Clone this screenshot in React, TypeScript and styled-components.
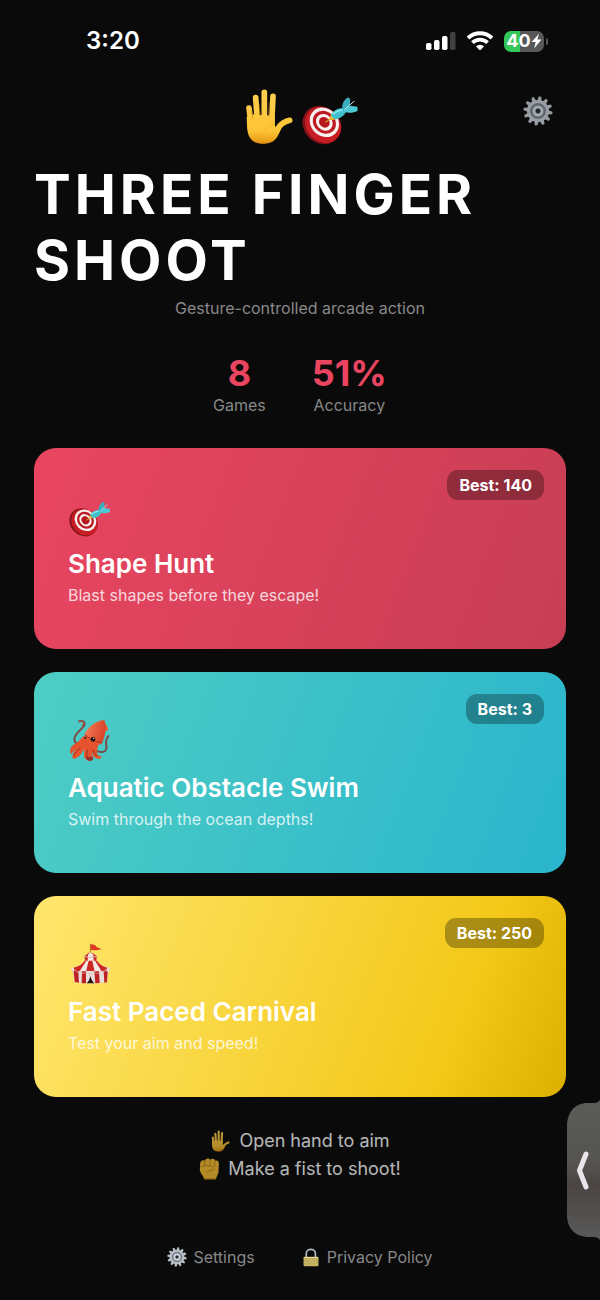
import React from 'react';
import styled, {createGlobalStyle} from 'styled-components';

const GlobalStyle = createGlobalStyle`
    * {
        box-sizing: border-box;
    }

    body {
        margin: 0;
        background: #0a0a0a;
        color: #fff;
        font-family: Inter, "Liberation Sans", sans-serif;
        font-size: 16px;
        line-height: 20px;
    }

    h1, h2, p, dl, dt, dd {
        margin: 0;
    }

    button {
        border: 0;
        padding: 0;
        background: none;
        color: inherit;
        font: inherit;
        cursor: pointer;
    }
`

const Screen = styled.div`
    position: relative;
    min-height: 100vh;
    padding: 0 34px 32px;
`

const StatusBar = styled.div`
    display: flex;
    align-items: center;
    justify-content: space-between;
    padding: 26px 18px 0 52px;
    height: 56px;
`

const Clock = styled.time`
    font-size: 24px;
    font-weight: 600;
    line-height: 30px;
`

const StatusIcons = styled.div`
    display: flex;
    align-items: center;
    gap: 10px;
`

const Battery = styled.div`
    display: flex;
    align-items: center;
    gap: 2px;

    &::after {
        content: '';
        width: 2px;
        height: 7px;
        border-radius: 0 2px 2px 0;
        background: #58585a;
    }
`

const BatteryLevel = styled.div`
    display: flex;
    align-items: center;
    justify-content: center;
    width: 40px;
    height: 21px;
    border-radius: 7px;
    background: linear-gradient(90deg, #34c759 40%, #58585a 40%);
    font-size: 18px;
    font-weight: 700;
`

const Header = styled.header`
    display: grid;
    grid-template-columns: 56px 1fr 56px;
    align-items: start;
    padding-top: 32px;
`

const HeroIcons = styled.div`
    display: flex;
    grid-column: 2;
    align-items: flex-end;
    justify-content: center;
    gap: 6px;
`

const GearButton = styled.button`
    display: flex;
    align-items: center;
    justify-content: center;
    height: 46px;
    opacity: 0.8;
`

const Title = styled.h1`
    padding-top: 16px;
    font-size: 55px;
    font-weight: 700;
    line-height: 66px;
    letter-spacing: 4px;
`

const Subtitle = styled.p`
    padding-top: 5px;
    color: #888;
    text-align: center;
`

const Stats = styled.dl`
    display: flex;
    justify-content: center;
    gap: 46px;
    padding: 34px 0 33px;
`

const Stat = styled.div`
    display: flex;
    flex-direction: column-reverse;
    align-items: center;
`

const StatValue = styled.dd`
    color: #e94560;
    font-size: 36px;
    font-weight: 700;
    line-height: 43px;
`

const StatLabel = styled.dt`
    color: #888;
`

const Games = styled.main`
    display: flex;
    flex-direction: column;
    gap: 23px;
`

type CardProps = {
    $colors: string;
}

const Card = styled.button<CardProps>`
    position: relative;
    display: flex;
    flex-direction: column;
    align-items: flex-start;
    width: 100%;
    padding: 47px 34px 44px;
    border-radius: 22px;
    background: linear-gradient(111deg, ${props => props.$colors});
    text-align: left;

    > svg {
        margin-left: 1px;
    }
`

const CardTitle = styled.h2`
    padding: 10px 0 4px;
    font-size: 26px;
    font-weight: 600;
    line-height: 34px;
`

const CardText = styled.p`
    color: rgba(255, 255, 255, 0.8);
`

const Badge = styled.span`
    position: absolute;
    top: 22px;
    right: 22px;
    padding: 5px 12px;
    border-radius: 11px;
    background: rgba(0, 0, 0, 0.3);
    font-weight: 700;
`

const Hints = styled.div`
    display: flex;
    flex-direction: column;
    align-items: center;
    padding-top: 30px;
    opacity: 0.7;
`

const Hint = styled.p`
    display: flex;
    align-items: center;
    gap: 8px;
    font-size: 18px;
    line-height: 28px;
`

const Footer = styled.footer`
    display: flex;
    justify-content: center;
    gap: 46px;
    padding-top: 64px;
`

const FooterLink = styled.a`
    display: flex;
    align-items: center;
    gap: 6px;
    color: #888;
    text-decoration: none;
`

const DrawerHandle = styled.button`
    position: fixed;
    right: 0;
    bottom: 58px;
    display: flex;
`

type IconProps = {
    width: number;
    height: number;
}

const Signal = () => (
    <svg width="31" height="20" viewBox="0 0 31 20" aria-hidden="true">
        <rect x="1" y="12" width="5.5" height="7" rx="1.8" fill="#fff"/>
        <rect x="9" y="9" width="5.5" height="10" rx="1.8" fill="#fff"/>
        <rect x="17" y="5" width="5.5" height="14" rx="1.8" fill="#fff"/>
        <rect x="25" y="1" width="5.5" height="18" rx="1.8" fill="#404040"/>
    </svg>
)

const Wifi = () => (
    <svg width="28" height="20" viewBox="0 0 28 20" aria-hidden="true">
        <g fill="none" stroke="#fff" strokeWidth="3.8">
            <path d="M2 7a17.5 17.5 0 0 1 24 0"/>
            <path d="M6.4 11.7a11 11 0 0 1 15.2 0"/>
        </g>
        <path d="M10 15.4a5.8 5.8 0 0 1 8 0l-3.2 3.4q-.8.8-1.6 0z" fill="#fff"/>
    </svg>
)

const Bolt = () => (
    <svg width="11" height="16" viewBox="0 0 10 16" aria-hidden="true">
        <path d="M7.6.8 0 9h4.2L2.6 15.4 10 6.6H5.8z" fill="#fff"/>
    </svg>
)

const Hand = ({width, height}: IconProps) => (
    <svg width={width} height={height} viewBox="36 25 162 171" aria-hidden="true">
        <defs>
            <linearGradient id="handSkin" gradientUnits="userSpaceOnUse" x1="0" y1="28" x2="0" y2="194">
                <stop offset="0" stopColor="#ffcf4f"/>
                <stop offset="0.75" stopColor="#fdc436"/>
                <stop offset="1" stopColor="#e2950f"/>
            </linearGradient>
        </defs>
        <g fill="none" stroke="url(#handSkin)" strokeWidth="17" strokeLinecap="round">
            <path d="M57 85 64 140"/>
            <path d="M77 54 83 135"/>
            <path d="M103 38V130"/>
            <path d="M129 50 125 130"/>
            <path d="M179 122q-22 6-32 20l-14 22"/>
        </g>
        <path
            d="M50 112C60 103 76 104 94 106L134 108 135 141C143 140 149 135 157 130L152 151C143 172 135 192 99 192 62 192 52 168 51 138z"
            fill="url(#handSkin)"
        />
        <path d="M68 116 65 94M91 110 87 72M115 108 118 68" stroke="#c27a0b" strokeWidth="3" strokeLinecap="round" fill="none" opacity="0.5"/>
        <path d="M62 174c9 15 23 17 40 17 17 0 27-5 35-15" stroke="#d9860d" strokeWidth="3" fill="none" opacity="0.5"/>
        <path d="M104 152c7-12 17-17 31-17" stroke="#eaa51f" strokeWidth="3" fill="none" opacity="0.5"/>
    </svg>
)

const Dart = ({width, height}: IconProps) => (
    <svg width={width} height={height} viewBox="216 48 171 147" preserveAspectRatio="xMidYMax meet" aria-hidden="true">
        <g transform="rotate(45 276 134)">
            <ellipse cx="276" cy="136" rx="61" ry="53" fill="#84141a"/>
            <ellipse cx="279" cy="132" rx="58" ry="50" fill="#c81d24"/>
            <ellipse cx="276" cy="124" rx="47" ry="41" fill="#f8f2f1"/>
            <ellipse cx="276" cy="124" rx="37" ry="32" fill="#bd1c24"/>
            <ellipse cx="276" cy="124" rx="27" ry="23" fill="#f8f2f1"/>
            <ellipse cx="276" cy="124" rx="17" ry="15" fill="#b5181f"/>
        </g>
        <path d="M287 126 302 116" stroke="#d19422" strokeWidth="4" strokeLinecap="round"/>
        <path d="m298 117 5-14 15 14-14 4z" fill="#edb62d"/>
        <path d="M303 106c3-12 17-20 34-22l12 10c-6 13-17 22-33 24-7-2-11-6-13-12z" fill="#40bfcd"/>
        <path d="M310 101q12-10 27-11" stroke="#8fe6ea" strokeWidth="5" strokeLinecap="round" fill="none"/>
        <path d="M337 88c-2-14 3-27 17-36l7 6-2 21-14 15z" fill="#39aebd"/>
        <path d="M341 92 360 77l22 3 1 12c-13 7-28 8-40 3z" fill="#4cc9d4"/>
        <path d="m344 88 28-24" stroke="#c5eef0" strokeWidth="3" strokeLinecap="round"/>
    </svg>
)

const teeth = Array.from({length: 12}, (_, i) => i * 30 + 8)

const Gear = ({width, height}: IconProps) => (
    <svg width={width} height={height} viewBox="0 0 60 60" aria-hidden="true">
        {teeth.map(angle => (
            <path key={angle} d="M25.5 10 27.5 1h5l2 9z" fill="#b9c0c8" transform={`rotate(${angle} 30 30)`}/>
        ))}
        <circle cx="30" cy="30" r="19" fill="#858e98" stroke="#bcc3ca" strokeWidth="6"/>
        <circle cx="30" cy="30" r="14" fill="none" stroke="#6a737e" strokeWidth="2"/>
        <circle cx="30" cy="30" r="8" fill="#59626d" stroke="#d0d5da" strokeWidth="5"/>
        <circle cx="30" cy="30" r="4" fill="#22262b"/>
    </svg>
)

const Squid = ({width, height}: IconProps) => (
    <svg width={width} height={height} viewBox="57 58 126 126" aria-hidden="true">
        <defs>
            <linearGradient id="squidBody" x1="0" y1="0" x2="1" y2="0.3">
                <stop offset="0" stopColor="#f8805a"/>
                <stop offset="1" stopColor="#d8452a"/>
            </linearGradient>
        </defs>
        <g fill="none" strokeLinecap="round">
            <path d="M87 65c17-3 21 5 13 16-10 13-27 23-27 37 0 9 5 14 13 15" stroke="#7b4a49" strokeWidth="6"/>
            <path d="M88 65c14-2 17 4 9 14" stroke="#a55444" strokeWidth="4"/>
            <path d="M144 155c19 7 28-4 25-17-2-10-2-18 6-29" stroke="#7b4a49" strokeWidth="6"/>
        </g>
        <path d="M166 74c6 5 9 11 8 17-4 4-9 5-14 4z" fill="#ea6440"/>
        <path d="M104 102c10-19 32-38 58-41 8 8 8 37-6 70-8 11-49-5-52-29z" fill="url(#squidBody)"/>
        <path d="M105 107c-12 8-16 18-31 26-11 5-17 17-12 29 3 4 6-8 15-12-7 8-12 20-9 25 4 7 18-2 27-14 3-5 5-8 8-12 0 13-5 24 5 30 8 8 18 5 20-1 2-6-3-14-2-23 2 12 6 21 16 22 11 3 17-8 8-8-11 0-10-14-7-27 3-6 6-10 8-15-14-3-36-8-46-20z" fill="#e5532f"/>
        <path d="M104 103c11 12 31 25 52 26" stroke="#9f3523" strokeWidth="3" fill="none"/>
        <path d="M91 145c-9 7-17 14-20 23M113 150c-2 9-4 17-1 24M130 150c0 10 5 16 12 19" stroke="#9d2d20" strokeWidth="3" fill="none"/>
        <path d="M110 170c6 4 12 4 18 0l1 11c-7 4-14 3-20-3z" fill="#8e3230"/>
        <circle cx="106" cy="114" r="3" fill="#2a1415"/>
        <circle cx="129" cy="119" r="7" fill="#201214"/>
        <circle cx="131" cy="116" r="2" fill="#fff"/>
    </svg>
)

const Tent = ({width, height}: IconProps) => (
    <svg width={width} height={height} viewBox="57 40 126 126" aria-hidden="true">
        <path d="M121 42v29" stroke="#a9802c" strokeWidth="3"/>
        <path d="m122 43 13 3 4 5 16 8-17 3-16-1z" fill="#e23a22"/>
        <path d="M103 79c7-2 14-6 18-12 4 6 12 10 20 12l-3 17h-32z" fill="#f5e9e4"/>
        <path d="m121 67-7 9-1 20h-7l-3-17zM121 67l9 9 1 20h7l3-17z" fill="#c92d29"/>
        <path d="M103 93h38c7 10 21 18 39 22l-4 12H68l-5-11c18-4 32-12 40-23z" fill="#f2e8e4"/>
        <path d="m109 93-21 33H73l-2-12c17-5 26-11 32-21zM116 93h11l7 33h-26zM135 93h6c7 10 16 17 31 21l-5 12h-11z" fill="#cc2826"/>
        <path d="M69 124h105l-3 34-24 3H94l-22-4z" fill="#e6dcda"/>
        <path d="m71 124 14 1 2 34-13-2zM96 125h12v36H95zM133 125h14l2 35-13 1zM161 125h12l-2 33-8 1z" fill="#bd2122"/>
        <path d="M121 138c-1 10-5 17-11 23h23c-6-6-10-13-12-23z" fill="#26100f"/>
        <path d="M63 116q7 14 12 3 7 16 16 4 8 15 17 4 12 12 26 0 9 11 18-3 8 9 14-4 8 6 14-5" fill="none" stroke="#d8b9ad" strokeWidth="2"/>
        <path d="M102 80q19 7 40 0" fill="none" stroke="#d8b9ad" strokeWidth="3"/>
    </svg>
)

const Fist = ({width, height}: IconProps) => (
    <svg width={width} height={height} viewBox="0 0 62 66" aria-hidden="true">
        <path d="M3 18C3 8 12 5 17 8c3-8 13-8 16-2 5-6 14-4 15 2 8-3 12 3 11 12l-1 22c-1 8-6 12-8 22H15C13 53 2 47 2 34z" fill="#fcc234"/>
        <path d="M17 9v15M32 7v16M47 9v16" stroke="#a46b10" strokeWidth="2"/>
        <path d="M4 27c10-5 24-4 35-2 9 2 8 11 0 12-7 1-13 1-17 6" fill="none" stroke="#b0750f" strokeWidth="2"/>
        <path d="M15 62h36" stroke="#dc9a1b" strokeWidth="4"/>
    </svg>
)

const Lock = ({width, height}: IconProps) => (
    <svg width={width} height={height} viewBox="0 0 48 56" aria-hidden="true">
        <path d="M10 29V17C10 0 37 0 37 17v12" fill="none" stroke="#aeb9c0" strokeWidth="5"/>
        <rect x="2" y="26" width="44" height="28" rx="3" fill="#c7b565"/>
        <path d="M3 32h42M3 39h42M3 46h42" stroke="#b5a356" strokeWidth="2"/>
        <path d="M3 28h42" stroke="#e7dc9d" strokeWidth="3"/>
    </svg>
)

const games = [
    {
        title: 'Shape Hunt',
        text: 'Blast shapes before they escape!',
        best: 140,
        colors: '#e94560, #c73e54',
        Icon: Dart,
    },
    {
        title: 'Aquatic Obstacle Swim',
        text: 'Swim through the ocean depths!',
        best: 3,
        colors: '#4ecdc4, #2ab5cd',
        Icon: Squid,
    },
    {
        title: 'Fast Paced Carnival',
        text: 'Test your aim and speed!',
        best: 250,
        colors: '#ffe66d, #f3c818 78%, #ddb000',
        Icon: Tent,
    },
]

const App = () => (
    <>
        <GlobalStyle/>
        <Screen>
            <StatusBar>
                <Clock>3:20</Clock>
                <StatusIcons>
                    <Signal/>
                    <Wifi/>
                    <Battery>
                        <BatteryLevel>40<Bolt/></BatteryLevel>
                    </Battery>
                </StatusIcons>
            </StatusBar>

            <Header>
                <HeroIcons>
                    <Hand width={54} height={57}/>
                    <Dart width={57} height={49}/>
                </HeroIcons>
                <GearButton type="button" aria-label="Settings">
                    <Gear width={30} height={30}/>
                </GearButton>
            </Header>

            <Title>THREE FINGER SHOOT</Title>
            <Subtitle>Gesture-controlled arcade action</Subtitle>

            <Stats>
                <Stat>
                    <StatLabel>Games</StatLabel>
                    <StatValue>8</StatValue>
                </Stat>
                <Stat>
                    <StatLabel>Accuracy</StatLabel>
                    <StatValue>51%</StatValue>
                </Stat>
            </Stats>

            <Games>
                {games.map(({title, text, best, colors, Icon}) => (
                    <Card key={title} type="button" $colors={colors}>
                        <Icon width={42} height={42}/>
                        <CardTitle>{title}</CardTitle>
                        <CardText>{text}</CardText>
                        <Badge>Best: {best}</Badge>
                    </Card>
                ))}
            </Games>

            <Hints>
                <Hint><Hand width={21} height={22}/>Open hand to aim</Hint>
                <Hint><Fist width={21} height={22}/>Make a fist to shoot!</Hint>
            </Hints>

            <Footer>
                <FooterLink href="#settings"><Gear width={20} height={20}/>Settings</FooterLink>
                <FooterLink href="#privacy"><Lock width={20} height={19}/>Privacy Policy</FooterLink>
            </Footer>
        </Screen>

        <DrawerHandle type="button" aria-label="Open drawer">
            <svg width="34" height="142" viewBox="0 0 34 142" aria-hidden="true">
                <defs>
                    <linearGradient id="handle" x1="0" y1="0" x2="0" y2="1">
                        <stop offset="0" stopColor="#5b5b58"/>
                        <stop offset="0.45" stopColor="#555451"/>
                        <stop offset="0.6" stopColor="#4b4542"/>
                        <stop offset="1" stopColor="#595a5a"/>
                    </linearGradient>
                </defs>
                <path d="M34 0q-2 3-6 3h-6C8 3 1 13 1 27v88c0 13 8 22 22 22h5q4 0 6 3z" fill="url(#handle)"/>
                <path d="M20 54 13.5 70.5 20 87" fill="none" stroke="#e9e4ea" strokeWidth="5" strokeLinecap="round" strokeLinejoin="round"/>
            </svg>
        </DrawerHandle>
    </>
)

export default App
